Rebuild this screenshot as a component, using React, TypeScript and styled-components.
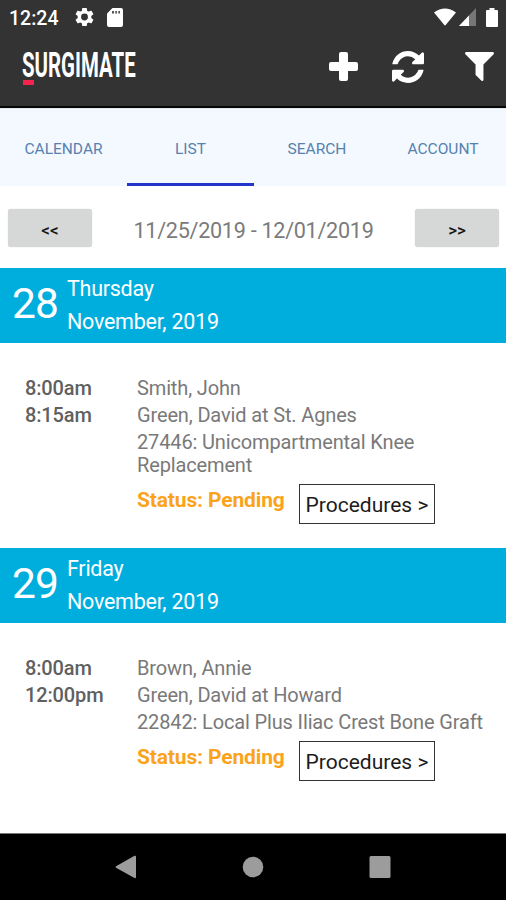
import React from "react";
import styled, { createGlobalStyle } from "styled-components";

const GlobalStyle = createGlobalStyle`
  * { box-sizing: border-box; }
  body { margin: 0; background: #fff; font-family: Roboto, "Noto Sans", sans-serif; }
  button { font-family: inherit; }
`;

const Screen = styled.div`
  width: 506px;
  height: 900px;
  display: flex;
  flex-direction: column;
  overflow: hidden;
  background: #fff;
`;

const Header = styled.header`
  height: 108px;
  flex: none;
  background: #333;
  border-bottom: 2px solid #060606;
`;

const StatusBar = styled.div`
  height: 36px;
  padding: 0 8px 2px 9px;
  display: flex;
  align-items: center;
  justify-content: space-between;
`;

const StatusGroup = styled.div`
  display: flex;
  align-items: center;
`;

const Clock = styled.span`
  width: 66px;
  padding-top: 3px;
  font-size: 19.5px;
  font-weight: 500;
  line-height: 34px;
  color: #fff;
`;

const Icon = styled.svg<{ $w: number; $h: number; $gap?: number }>`
  display: block;
  flex: none;
  width: ${(p) => p.$w}px;
  height: ${(p) => p.$h}px;
  margin-left: ${(p) => p.$gap ?? 0}px;
  fill: #fff;
`;

const Toolbar = styled.div`
  height: 70px;
  padding: 14px 12px 0 22px;
  display: flex;
  justify-content: space-between;
`;

const Brand = styled.div`
  width: 115px;
`;

const BrandName = styled.div`
  height: 27px;
  width: max-content;
  font-size: 35px;
  font-weight: 700;
  line-height: 31px;
  color: #fff;
  transform: scaleX(0.583);
  transform-origin: 0 0;
`;

const BrandBar = styled.div`
  width: 11px;
  height: 5px;
  margin: 3px 0 0 1px;
  background: #f5234f;
`;

const Actions = styled.div`
  height: 33px;
  display: flex;
  align-items: center;
`;

const Tabs = styled.nav`
  height: 78px;
  flex: none;
  display: grid;
  grid-template-columns: 127px 127px 126px 126px;
  background: #f3f9ff;
  border-top: 1px solid #e4e9ee;
`;

const Tab = styled.div<{ $active?: boolean }>`
  display: flex;
  align-items: center;
  justify-content: center;
  padding-top: 5px;
  font-size: 15.5px;
  color: #5682ae;
  border-bottom: 3px solid ${(p) => (p.$active ? "#2236cc" : "transparent")};
`;

const RangeBar = styled.div`
  height: 82px;
  flex: none;
  padding: 23px 7px 0 8px;
  display: flex;
  justify-content: space-between;
`;

const RangeButton = styled.button`
  width: 84px;
  height: 38px;
  padding: 4px 0 0;
  border: 0;
  border-radius: 3px;
  background: #d6d8d7;
  box-shadow: 0 0 1px #c4c4c4;
  font-size: 17px;
  font-weight: 500;
  color: #151515;
`;

const RangeText = styled.div`
  font-size: 21.6px;
  line-height: 43px;
  letter-spacing: -0.28px;
  color: #7b7b7b;
`;

const DayBar = styled.div`
  height: 75px;
  flex: none;
  display: flex;
  padding-left: 12px;
  background: #00aede;
  color: #fff;
`;

const DayNumber = styled.div`
  width: 55px;
  font-size: 42.5px;
  line-height: 71px;
  letter-spacing: -0.8px;
`;

const DayName = styled.div`
  padding-top: 4px;
  font-size: 21.5px;
  line-height: 33px;
  letter-spacing: -0.26px;
`;

const Entry = styled.section<{ $h: number }>`
  height: ${(p) => p.$h}px;
  flex: none;
  display: grid;
  grid-template-columns: 112px 1fr;
  align-content: start;
  padding: 32px 10px 0 25px;
  font-size: 20px;
  line-height: 23px;
  letter-spacing: -0.14px;
  color: #797979;
`;

const Times = styled.div`
  font-weight: 500;
  color: #606060;
`;

const Line = styled.div`
  padding: 2px 0;
`;

const StatusRow = styled.div`
  display: flex;
  align-items: flex-start;
  padding-top: 5px;
`;

const Status = styled.div`
  width: 162px;
  padding-top: 5px;
  font-size: 21px;
  line-height: 23px;
  letter-spacing: -0.14px;
  font-weight: 700;
  color: #faa31b;
`;

const ProceduresButton = styled.button`
  width: 136px;
  height: 40px;
  padding: 2px 0 0;
  border: 1px solid #333;
  background: #fff;
  font-size: 21px;
  color: #1c1c1c;
  white-space: nowrap;
`;

const NavBar = styled.footer`
  height: 67px;
  margin-top: auto;
  flex: none;
  display: flex;
  justify-content: center;
  align-items: center;
  gap: 105px;
  background: #000;
  border-top: 1px solid #777;
`;

const NavIcon = styled.svg`
  width: 22px;
  height: 24px;
  fill: #9c9c9c;
`;

const days = [
  {
    number: "28", name: "Thursday", month: "November, 2019", height: 205,
    times: ["8:00am", "8:15am"],
    lines: ["Smith, John", "Green, David at St. Agnes", "27446: Unicompartmental Knee Replacement"],
  },
  {
    number: "29", name: "Friday", month: "November, 2019", height: 205,
    times: ["8:00am", "12:00pm"],
    lines: ["Brown, Annie", "Green, David at Howard", "22842: Local Plus Iliac Crest Bone Graft"],
  },
];

export default function App() {
  return (
    <Screen>
      <GlobalStyle />
      <Header>
        <StatusBar>
          <StatusGroup>
            <Clock>12:24</Clock>
            <Icon $w={19} $h={20} viewBox="2 2 20 20">
              <path d="M19.14 12.94c.04-.3.06-.61.06-.94 0-.32-.02-.64-.07-.94l2.03-1.58a.49.49 0 0 0 .12-.61l-1.92-3.32a.488.488 0 0 0-.59-.22l-2.39.96c-.5-.38-1.03-.7-1.62-.94l-.36-2.54a.484.484 0 0 0-.48-.41h-3.84c-.24 0-.43.17-.47.41l-.36 2.54c-.59.24-1.13.57-1.62.94l-2.39-.96c-.22-.08-.47 0-.59.22L2.74 8.87c-.12.21-.08.47.12.61l2.03 1.58c-.05.3-.09.63-.09.94s.02.64.07.94l-2.03 1.58a.49.49 0 0 0-.12.61l1.92 3.32c.12.22.37.29.59.22l2.39-.96c.5.38 1.03.7 1.62.94l.36 2.54c.05.24.24.41.48.41h3.84c.24 0 .44-.17.47-.41l.36-2.54c.59-.24 1.13-.56 1.62-.94l2.39.96c.22.08.47 0 .59-.22l1.92-3.32a.49.49 0 0 0-.12-.61l-2.01-1.58zM12 15.6a3.6 3.6 0 1 1 0-7.2 3.6 3.6 0 0 1 0 7.2z" />
            </Icon>
            <Icon $w={16} $h={19} $gap={13} viewBox="0 0 16 19">
              <path d="M5.500 0H14q2 0 2 2v15q0 2-2 2H2q-2 0-2-2V5.500z" />
              <path d="M5 3h2v2.500H5zM8.300 3h1.700v2.500H8.300zM11.300 3H13v2.500h-1.700z" fill="#555" />
            </Icon>
          </StatusGroup>
          <StatusGroup>
            <Icon $w={22} $h={18} viewBox="0 0 22 18">
              <path d="M0 4.500Q11-3.700 22 4.500L11.700 17Q11 17.900 10.300 17z" />
            </Icon>
            <Icon $w={17} $h={18} $gap={3} viewBox="0 0 17 18">
              <path d="M17 0V18H0z" fill="#777" />
              <path d="M10 7.400V18H0z" />
            </Icon>
            <Icon $w={12} $h={19} $gap={10} viewBox="0 0 12 19">
              <path d="M3.500 0h5v2H11q1 0 1 1V18q0 1-1 1H1q-1 0-1-1V3q0-1 1-1h2.500z" />
            </Icon>
          </StatusGroup>
        </StatusBar>
        <Toolbar>
          <Brand>
            <BrandName>SURGIMATE</BrandName>
            <BrandBar />
          </Brand>
          <Actions>
            <Icon $w={29} $h={29} viewBox="0 0 29 29">
              <rect x="10" y="0" width="9" height="29" rx="2" />
              <rect x="0" y="10" width="29" height="9" rx="2" />
            </Icon>
            <Icon $w={32} $h={32} $gap={34} viewBox="0 128 1536 1536">
              <path d="M1511 1056q0 5-1 7-64 268-268 434.500t-478 166.500q-146 0-282.500-55t-243.500-157l-129 129q-19 19-45 19t-45-19-19-45v-448q0-26 19-45t45-19h448q26 0 45 19t19 45-19 45l-137 137q71 66 161 102t187 36q134 0 250-65t186-179q11-17 53-117 8-23 30-23h192q13 0 22.500 9.500t9.500 22.500zm25-800v448q0 26-19 45t-45 19h-448q-26 0-45-19t-19-45 19-45l138-138q-148-137-349-137-134 0-250 65t-186 179q-11 17-53 117-8 23-30 23h-199q-13 0-22.500-9.500t-9.500-22.500v-7q65-268 270-434.500t480-166.500q146 0 284 55.500t245 156.500l130-129q19-19 45-19t45 19 19 45z" />
            </Icon>
            <Icon $w={29} $h={29} $gap={41} viewBox="0 256 1408 1408">
              <path d="M1403 295q17 41-14 70l-493 493v742q0 42-39 59-13 5-25 5-27 0-45-19l-256-256q-19-19-19-45v-486l-493-493q-31-29-14-70 17-39 59-39h1280q42 0 59 39z" />
            </Icon>
          </Actions>
        </Toolbar>
      </Header>
      <Tabs>
        <Tab>CALENDAR</Tab>
        <Tab $active>LIST</Tab>
        <Tab>SEARCH</Tab>
        <Tab>ACCOUNT</Tab>
      </Tabs>
      <RangeBar>
        <RangeButton>&lt;&lt;</RangeButton>
        <RangeText>11/25/2019 - 12/01/2019</RangeText>
        <RangeButton>&gt;&gt;</RangeButton>
      </RangeBar>
      {days.map((day) => (
        <React.Fragment key={day.number}>
          <DayBar>
            <DayNumber>{day.number}</DayNumber>
            <DayName>
              <div>{day.name}</div>
              <div>{day.month}</div>
            </DayName>
          </DayBar>
          <Entry $h={day.height}>
            <Times>
              {day.times.map((t) => <Line key={t}>{t}</Line>)}
            </Times>
            <div>
              {day.lines.map((l) => <Line key={l}>{l}</Line>)}
              <StatusRow>
                <Status>Status: Pending</Status>
                <ProceduresButton>Procedures &gt;</ProceduresButton>
              </StatusRow>
            </div>
          </Entry>
        </React.Fragment>
      ))}
      <NavBar>
        <NavIcon viewBox="0 0 22 24"><path d="M1 11.200L19.500.8q1.500-.6 1.500 1V22q0 1.600-1.500 1L1 12.800q-1-.8 0-1.600z" /></NavIcon>
        <NavIcon viewBox="0 0 22 24"><circle cx="11" cy="12" r="10.300" /></NavIcon>
        <NavIcon viewBox="0 0 22 24"><rect x="0.500" y="1" width="21" height="22" rx="1.500" /></NavIcon>
      </NavBar>
    </Screen>
  );
}
